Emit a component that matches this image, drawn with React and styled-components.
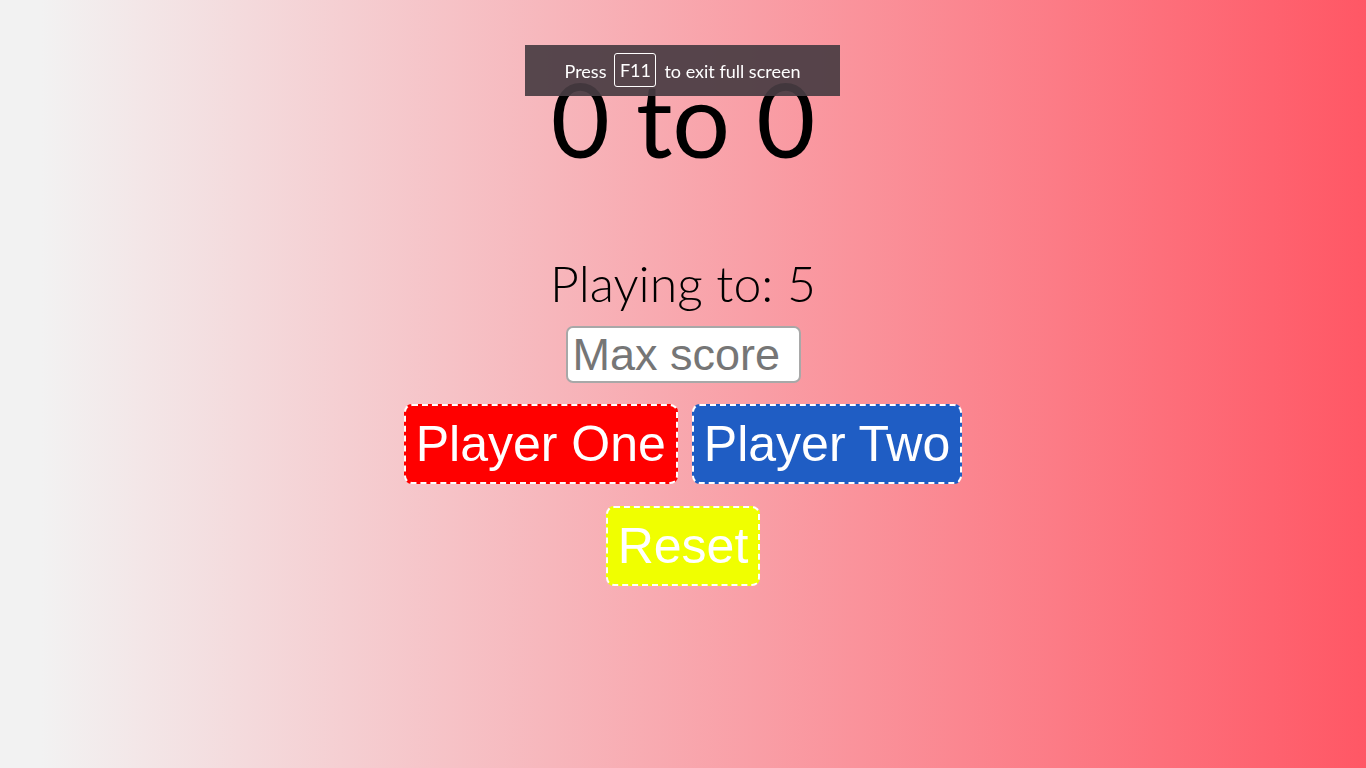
import React, { useState } from "react";
import styled, { createGlobalStyle } from "styled-components";

const GlobalStyle = createGlobalStyle`
  html, body {
    margin: 0;
    padding: 0;
    height: 100%;
  }
  body {
    font-family: Lato, "Liberation Sans", sans-serif;
    background: linear-gradient(to right, #f2f2f2 3%, #ff5765 100%);
    min-height: 768px;
  }
`;

const Page = styled.main`
  display: flex;
  flex-direction: column;
  align-items: center;
  text-align: center;
  padding-top: 58px;
`;

const Score = styled.h1`
  margin: 0;
  font-family: Lato, sans-serif;
  font-weight: 400;
  font-size: 102px;
  line-height: 122px;
  color: #000;
`;

const Target = styled.h2`
  margin: 73px 0 0;
  font-family: Lato, sans-serif;
  font-weight: 300;
  font-size: 50px;
  line-height: 60px;
  color: #000;
`;

const ScoreInput = styled.input`
  box-sizing: border-box;
  width: 235px;
  height: 57px;
  margin-top: 13px;
  padding: 0 5px;
  border: 2px solid #a8a8a8;
  border-radius: 7px;
  background: #fff;
  font-family: "Liberation Sans", Arial, sans-serif;
  font-size: 45px;
  color: #000;
  &::placeholder {
    color: #767676;
  }
`;

const Row = styled.div`
  display: flex;
  justify-content: center;
  gap: 14px;
  margin-top: ${(p) => p.top || 21}px;
`;

const Button = styled.button`
  padding: 10px 10px;
  border: 2px dashed #fff;
  border-radius: 8px;
  background: ${(p) => p.bg};
  color: #fff;
  font-family: "Liberation Sans", Arial, sans-serif;
  font-size: 50px;
  line-height: 56px;
  cursor: pointer;
`;

const Banner = styled.div`
  position: fixed;
  top: 45px;
  left: 525px;
  width: 315px;
  height: 51px;
  display: flex;
  align-items: center;
  justify-content: center;
  gap: 8px;
  background: rgba(72, 60, 66, 0.92);
  color: #fff;
  font-family: Lato, sans-serif;
  font-size: 18px;
`;

const Key = styled.span`
  display: inline-flex;
  align-items: center;
  justify-content: center;
  box-sizing: border-box;
  width: 42px;
  height: 34px;
  margin-top: -1px;
  border: 1px solid #fff;
  border-radius: 3px;
`;

export default function App() {
  const [one, setOne] = useState(0);
  const [two, setTwo] = useState(0);
  const [max, setMax] = useState(5);

  return (
    <>
      <GlobalStyle />
      <Page>
        <Score>
          {one} to {two}
        </Score>
        <Target>Playing to: {max}</Target>
        <ScoreInput
          type="number"
          placeholder="Max score"
          onChange={(e) => setMax(Number(e.target.value) || 5)}
        />
        <Row>
          <Button bg="#ff0000" onClick={() => setOne(one + 1)}>
            Player One
          </Button>
          <Button bg="#1f5dc4" onClick={() => setTwo(two + 1)}>
            Player Two
          </Button>
        </Row>
        <Row top={22}>
          <Button
            bg="#f0ff00"
            onClick={() => {
              setOne(0);
              setTwo(0);
            }}
          >
            Reset
          </Button>
        </Row>
      </Page>
      <Banner>
        Press <Key>F11</Key> to exit full screen
      </Banner>
    </>
  );
}
